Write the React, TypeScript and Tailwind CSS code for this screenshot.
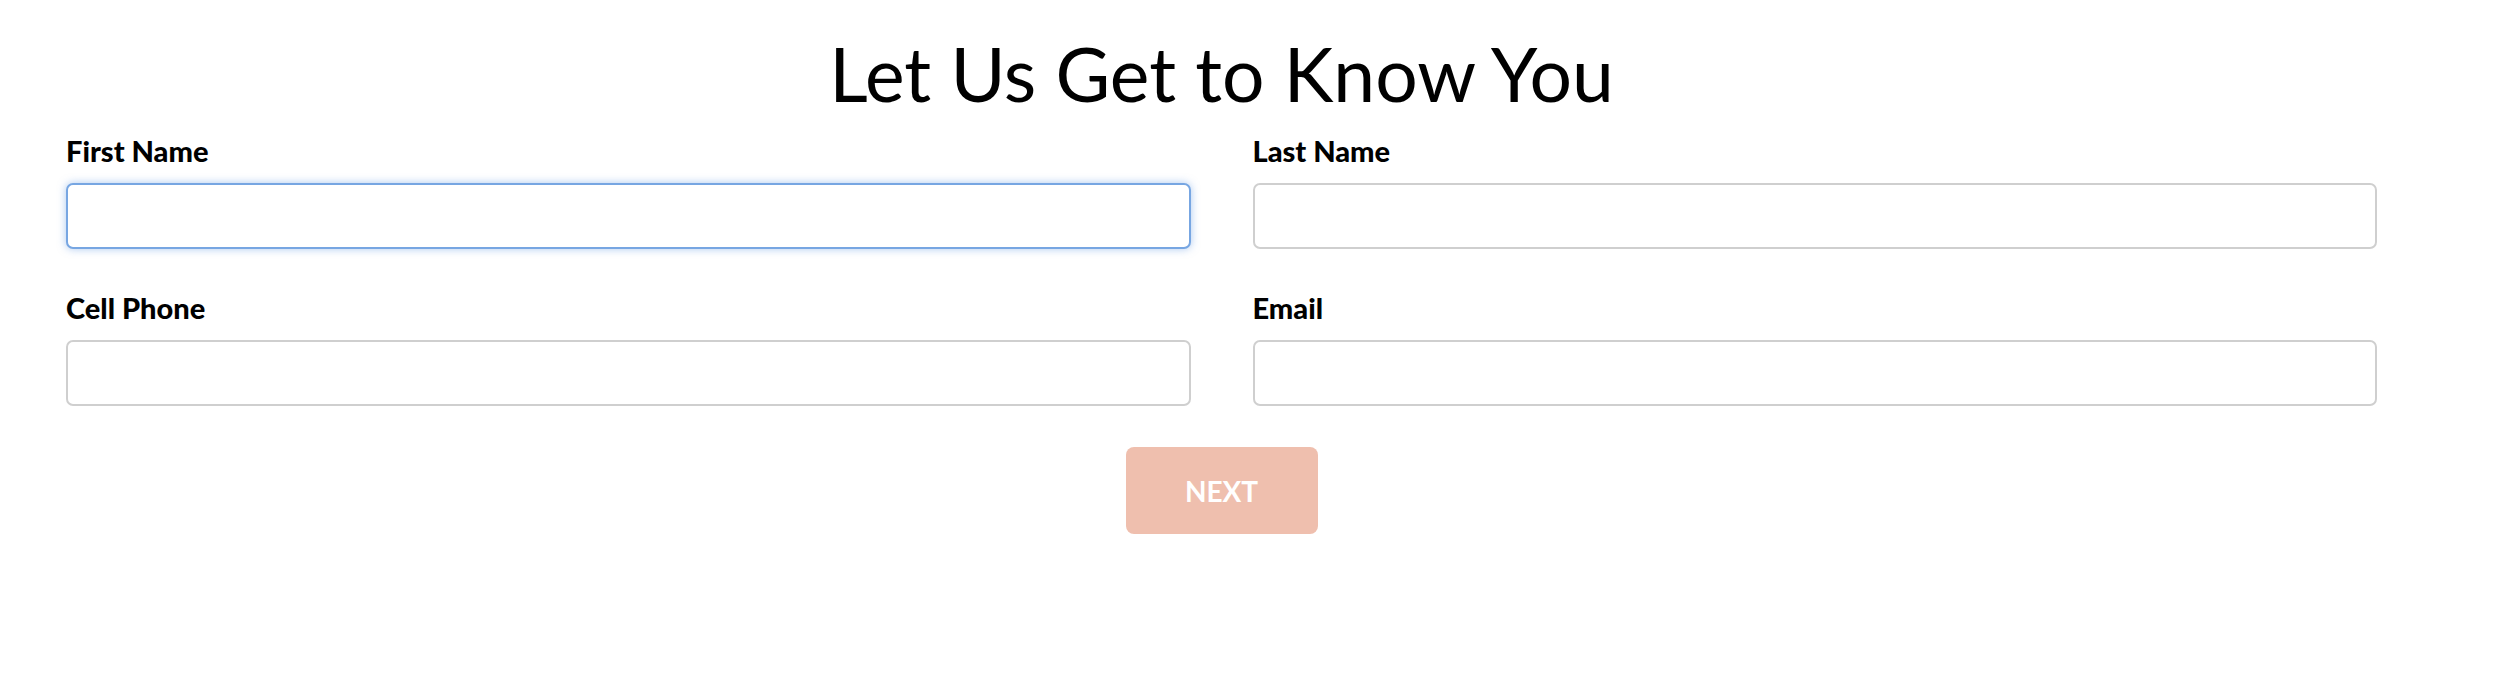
export default function App() {
  return (
    <div className="min-h-screen bg-white pl-[66px] pr-[135px] font-['Lato',_sans-serif] text-black">
      <h1 className="pt-[30px] text-center text-[75px] leading-[86px] font-normal">
        Let Us Get to Know You
      </h1>
      <form className="mt-[18px]">
        <div className="grid grid-cols-2 gap-x-[62px] gap-y-[42px]">
          <Field label="First Name" focused />
          <Field label="Last Name" />
          <Field label="Cell Phone" />
          <Field label="Email" />
        </div>
        <div className="mt-[41px] flex justify-center">
          <button
            type="button"
            className="h-[87px] w-[192px] rounded-[8px] bg-[#efbfae] text-[28px] font-bold text-white"
          >
            NEXT
          </button>
        </div>
      </form>
    </div>
  );
}

function Field({ label, focused }: { label: string; focused?: boolean }) {
  return (
    <div className="flex flex-col">
      <label className="text-[29px] leading-[34px] font-black">{label}</label>
      <input
        type="text"
        className={`mt-[15px] h-[66px] w-full rounded-[7px] border-2 bg-white px-4 outline-none ${
          focused
            ? "border-[#77a6e2] shadow-[0_0_8px_rgba(102,155,225,0.55)]"
            : "border-[#cfcfcf]"
        }`}
      />
    </div>
  );
}
